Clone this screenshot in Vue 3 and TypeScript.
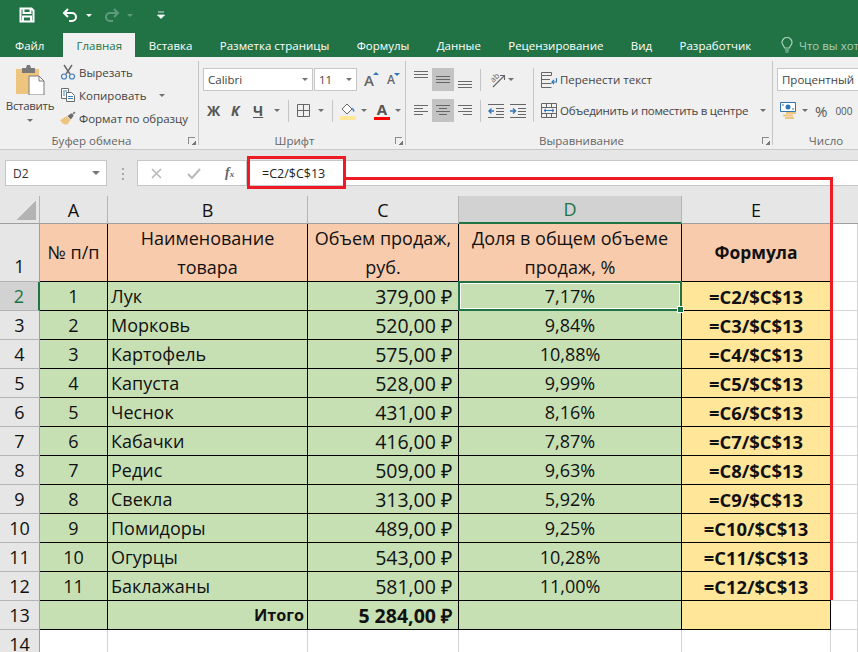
<script setup lang="ts">
interface Row {
  n: number
  name: string
  sum: string
  share: string
}

const tabs = ['Файл', 'Главная', 'Вставка', 'Разметка страницы', 'Формулы', 'Данные', 'Рецензирование', 'Вид', 'Разработчик']
const columns = ['A', 'B', 'C', 'D', 'E', '']

const rows: Row[] = [
  { n: 1, name: 'Лук', sum: '379,00 ₽', share: '7,17%' },
  { n: 2, name: 'Морковь', sum: '520,00 ₽', share: '9,84%' },
  { n: 3, name: 'Картофель', sum: '575,00 ₽', share: '10,88%' },
  { n: 4, name: 'Капуста', sum: '528,00 ₽', share: '9,99%' },
  { n: 5, name: 'Чеснок', sum: '431,00 ₽', share: '8,16%' },
  { n: 6, name: 'Кабачки', sum: '416,00 ₽', share: '7,87%' },
  { n: 7, name: 'Редис', sum: '509,00 ₽', share: '9,63%' },
  { n: 8, name: 'Свекла', sum: '313,00 ₽', share: '5,92%' },
  { n: 9, name: 'Помидоры', sum: '489,00 ₽', share: '9,25%' },
  { n: 10, name: 'Огурцы', sum: '543,00 ₽', share: '10,28%' },
  { n: 11, name: 'Баклажаны', sum: '581,00 ₽', share: '11,00%' },
]
</script>

<template>
  <div class="page">
    <div class="titlebar">
      <svg class="qa-save" width="16" height="16" viewBox="0 0 16 16"><path d="M1.500 1.500h11l2 2v11h-13z M4.500 2v4h7V2 M4 14.500V9.500h8v5" fill="none" stroke="#fff" stroke-width="2" /></svg>
      <svg class="qa-undo" width="16" height="14" viewBox="0 0 16 14"><path d="M6 1 2 5l4 4M2 5h8a4 4 0 0 1 0 8H7" fill="none" stroke="#fff" stroke-width="2" /></svg>
      <span class="qa-arrow"></span>
      <svg class="qa-redo" width="16" height="14" viewBox="0 0 16 14"><path d="M10 1l4 4-4 4M14 5H6a4 4 0 0 0 0 8h3" fill="none" stroke="#5f9b7c" stroke-width="2" /></svg>
      <span class="qa-arrow dim"></span>
      <svg class="qa-more" width="8" height="8" viewBox="0 0 8 8"><path d="M1 1h6M0.500 4h7L4 7.500z" fill="#fff" stroke="#fff" stroke-width="0.800" /></svg>
    </div>

    <div class="tabbar">
      <div v-for="tab in tabs" :key="tab" class="tab" :class="{ active: tab === 'Главная', file: tab === 'Файл' }">{{ tab }}</div>
      <svg class="bulb" width="12" height="16" viewBox="0 0 12 16"><path d="M3.500 11C3 8.500 1 8 1 5.500a5 5 0 0 1 10 0C11 8 9 8.500 8.500 11zM4 13h4M4.500 15h3" fill="none" stroke="#a9cfbb" stroke-width="1.200" /></svg>
      <div class="tell">Что вы хотите сделать?</div>
    </div>

    <div class="ribbon">
      <section class="group g-clip">
        <div class="clip-body">
          <div class="paste">
            <svg width="30" height="30" viewBox="0 0 30 30">
              <path d="M1 4h23v25H1z" fill="#eec57e" />
              <path d="M7 3h4l1-3h3l1 3h4v5H7z" fill="#787878" />
              <path d="M14 11h10l5 5v14H14z" fill="#fff" stroke="#7a7a7a" />
              <path d="M24 11v5h5" fill="none" stroke="#7a7a7a" />
            </svg>
            <span>Вставить</span>
            <i class="caret"></i>
          </div>
          <div class="clip-list">
            <div class="clip-item">
              <svg width="16" height="16" viewBox="0 0 16 16"><path d="M4 1l6 9M12 1 6 10" stroke="#6b6b6b" stroke-width="1.500" fill="none" /><circle cx="4" cy="12.500" r="2.500" fill="none" stroke="#3f7fbf" stroke-width="1.200" /><circle cx="12" cy="12.500" r="2.500" fill="none" stroke="#3f7fbf" stroke-width="1.200" /></svg>
              <span>Вырезать</span>
            </div>
            <div class="clip-item">
              <svg width="16" height="16" viewBox="0 0 16 16"><path d="M1.500 1.500h7v10h-7z" fill="#fff" stroke="#6b6b6b" /><path d="M6.500 5.500h5l3 3v6h-8z" fill="#fff" stroke="#6b6b6b" /><path d="M8 9.500h5M8 11.500h5M3 4h4M3 6h2M3 8h2" stroke="#3f7fbf" /></svg>
              <span>Копировать</span>
              <i class="caret copy-caret"></i>
            </div>
            <div class="clip-item">
              <svg width="17" height="16" viewBox="0 0 17 16"><path d="M0 10.500 7 6l4 4-3 5H5l-1-1-1 .500-1-2z" fill="#eec57e" /><path d="M8 6l4-3 1 1 2-3 1.500 1.500-3 2 1 1-3 4z" fill="#6b6b6b" /></svg>
              <span>Формат по образцу</span>
            </div>
          </div>
        </div>
        <div class="group-foot"><span>Буфер обмена</span><i class="launcher"></i></div>
      </section>

      <section class="group g-font">
        <div class="tool-rows">
          <div class="tool-row">
            <div class="combo font-name">Calibri<i class="caret"></i></div>
            <div class="combo font-size">11<i class="caret"></i></div>
            <div class="grow-a big">A<i class="up"></i></div>
            <div class="grow-a small">A<i class="down"></i></div>
          </div>
          <div class="tool-row format-row">
            <b class="fmt f-b">Ж</b>
            <b class="fmt f-i">К</b>
            <b class="fmt f-u">Ч</b>
            <i class="caret"></i>
            <span class="vsep s1"></span>
            <svg class="f-border" width="13" height="13" viewBox="0 0 13 13"><path d="M.5.500h12v12H.500zM6.500.500v12M.5 6.500h12" fill="none" stroke="#666" /></svg>
            <i class="caret f-c2"></i>
            <span class="vsep s2"></span>
            <svg class="f-fill" width="16" height="18" viewBox="0 0 16 18"><path d="M2 7l5-5 5 5-5 5z" fill="#fff" stroke="#666" /><path d="M12 5.500c2 1 3 3 2 4.500-1-.5-2-2-2-4.500z" fill="#3f7fbf" /><path d="M0 14h16v4H0z" fill="#ffe699" /></svg>
            <i class="caret f-c3"></i>
            <div class="font-color">A</div>
            <i class="caret f-c4"></i>
          </div>
        </div>
        <div class="group-foot"><span>Шрифт</span><i class="launcher"></i></div>
      </section>

      <section class="group g-align">
        <div class="align-body">
          <div class="align-col">
            <div class="tool-row">
              <svg width="22" height="23" viewBox="0 0 22 23"><path d="M4 3.500h14M4 6.500h14M4 9.500h14" stroke="#6a6a6a" /></svg>
              <svg class="on" width="22" height="23" viewBox="0 0 22 23"><path d="M4 8.500h14M4 11.500h14M4 14.500h14" stroke="#666" /></svg>
              <svg width="22" height="23" viewBox="0 0 22 23"><path d="M4 13.500h14M4 16.500h14M4 19.500h14" stroke="#6a6a6a" /></svg>
              <span class="vsep al-sep"></span>
              <svg class="orient" width="18" height="18" viewBox="0 0 18 18"><text x="2" y="10" transform="rotate(-45 6 7)" font-size="8" fill="#666">ab</text><path d="M5 16 16 5M12 4.500h4.500V9" fill="none" stroke="#666" stroke-width="1.100" /></svg>
              <i class="caret or-caret"></i>
            </div>
            <div class="tool-row">
              <svg width="22" height="23" viewBox="0 0 22 23"><path d="M4 6.500h14M4 9.500h9M4 12.500h14M4 15.500h9" stroke="#6a6a6a" /></svg>
              <svg class="on" width="22" height="23" viewBox="0 0 22 23"><path d="M4 6.500h14M7 9.500h8M4 12.500h14M7 15.500h8" stroke="#666" /></svg>
              <svg width="22" height="23" viewBox="0 0 22 23"><path d="M4 6.500h14M9 9.500h9M4 12.500h14M9 15.500h9" stroke="#6a6a6a" /></svg>
              <span class="vsep al-sep"></span>
              <svg class="indent" width="16" height="14" viewBox="0 0 16 14"><path d="M0 .500h16M8 4.500h8M8 7.500h8M8 10.500h8M0 13.500h16" stroke="#666" /><path d="M6 7H1M3.500 4.500 1 7l2.500 2.500" fill="none" stroke="#2f75b5" stroke-width="1.400" /></svg>
              <svg class="indent two" width="16" height="14" viewBox="0 0 16 14"><path d="M0 .500h16M8 4.500h8M8 7.500h8M8 10.500h8M0 13.500h16" stroke="#666" /><path d="M0 7h5M3 4.500 5.500 7 3 9.500" fill="none" stroke="#2f75b5" stroke-width="1.400" /></svg>
            </div>
          </div>
          <span class="vsep tall"></span>
          <div class="merge-col">
            <div class="merge-item">
              <svg width="16" height="16" viewBox="0 0 16 16"><path d="M.5.500h10v3H.500zM.5 3.500v12h10M.5 7.500H9M.5 11.500h10" fill="none" stroke="#666" /><path d="M15.500 6v4H11M13 8l-2 2 2 2" fill="none" stroke="#2f75b5" stroke-width="1.200" /></svg>
              <span>Перенести текст</span>
            </div>
            <div class="merge-item">
              <svg width="16" height="15" viewBox="0 0 16 15"><path d="M.5.500h15v14H.500zM.5 4.500h15M.5 10.500h15M5.500.500v4M10.500.500v4M5.500 10.500v4M10.500 10.500v4" fill="none" stroke="#666" /><path d="M3 7.500h10M5 5.800 3 7.500l2 1.700M11 5.800l2 1.700-2 1.700" fill="none" stroke="#2f75b5" /></svg>
              <span class="merge-text">Объединить и поместить в центре</span>
              <i class="caret merge-caret"></i>
            </div>
          </div>
        </div>
        <div class="group-foot"><span>Выравнивание</span><i class="launcher"></i></div>
      </section>

      <section class="group g-num">
        <div class="tool-rows">
          <div class="tool-row">
            <div class="combo num-format">Процентный</div>
          </div>
          <div class="tool-row num-row">
            <svg width="17" height="17" viewBox="0 0 17 17"><path d="M.5.500h15v9H.500z" fill="#fff" stroke="#2f75b5" /><circle cx="8" cy="5" r="2.500" fill="#2f75b5" /><path d="M2 3h2M12 7h2" stroke="#2f75b5" /><path d="M6 10h10v2H6zM3 12.500h10v2H3zM5 15h9v2H5z" fill="#eec57e" /></svg>
            <i class="caret num-caret"></i>
            <span class="percent">%</span>
            <span class="thousand">000</span>
          </div>
        </div>
        <div class="group-foot"><span>Число</span><i class="launcher"></i></div>
      </section>
    </div>

    <div class="formula-row">
      <div class="name-box"><span>D2</span><i class="caret"></i></div>
      <div class="dots"><i></i><i></i><i></i></div>
      <div class="fx-buttons">
        <svg width="11" height="11" viewBox="0 0 11 11"><path d="M1 1l9 9M10 1l-9 9" stroke="#b8b8b8" stroke-width="1.600" /></svg>
        <svg width="14" height="11" viewBox="0 0 14 11"><path d="M1 6l4 4 8-9" fill="none" stroke="#b8b8b8" stroke-width="2" /></svg>
        <span class="fx">f<small>x</small></span>
      </div>
      <div class="formula-input">=C2/$C$13</div>
    </div>

    <div class="sheet">
      <div class="corner"><i></i></div>
      <div v-for="col in columns" :key="col" class="col-head" :class="{ current: col === 'D', blank: col === '' }">{{ col }}</div>

      <div class="row-head first">1</div>
      <div class="cell head">№ п/п</div>
      <div class="cell head">Наименование<br />товара</div>
      <div class="cell head">Объем продаж,<br />руб.</div>
      <div class="cell head">Доля в общем объеме<br />продаж, %</div>
      <div class="cell head strong">Формула</div>
      <div class="cell empty"></div>

      <template v-for="(row, i) in rows" :key="row.n">
        <div class="row-head" :class="{ current: i === 0 }">{{ i + 2 }}</div>
        <div class="cell body center">{{ row.n }}</div>
        <div class="cell body left">{{ row.name }}</div>
        <div class="cell body right">{{ row.sum }}</div>
        <div class="cell body center" :class="{ selected: i === 0 }">{{ row.share }}</div>
        <div class="cell formula">=C{{ i + 2 }}/$C$13</div>
        <div class="cell empty"></div>
      </template>

      <div class="row-head">13</div>
      <div class="cell body"></div>
      <div class="cell body total">Итого</div>
      <div class="cell body right bold">5 284,00 ₽</div>
      <div class="cell body"></div>
      <div class="cell formula"></div>
      <div class="cell empty"></div>

      <div class="row-head">14</div>
      <div v-for="n in 6" :key="n" class="cell empty"></div>
    </div>

    <!-- красная выноска поверх таблицы -->
    <div class="callout-box"></div>
    <div class="callout-h"></div>
    <div class="callout-v"></div>
  </div>
</template>

<style>
html,
body {
  margin: 0;
  overflow: hidden;
}
</style>

<style scoped>
.page {
  position: relative;
  width: 858px;
  height: 652px;
  overflow: hidden;
  background: #fff;
  font-family: "Open Sans", "Liberation Sans", sans-serif;
  color: #444;
}

.titlebar {
  display: flex;
  align-items: center;
  height: 33px;
  background: #217346;
}

.qa-save { margin: -3px 0 0 19px; }
.qa-undo { margin: -3px 0 0 27px; }
.qa-redo { margin: -3px 0 0 12px; }
.qa-more { margin: -3px 0 0 24px; }

.qa-arrow {
  width: 0;
  height: 0;
  margin: -2px 0 0 8px;
  border: 3px solid transparent;
  border-top: 3px solid #fff;
  border-bottom: 0;
}

.qa-arrow.dim { margin-left: 7px; border-top-color: #5f9b7c; }

.tabbar {
  display: flex;
  align-items: center;
  height: 24px;
  background: #217346;
  color: #fff;
  font-size: 11.500px;
  white-space: nowrap;
}

.tab {
  display: flex;
  flex: none;
  align-items: center;
  height: 24px;
  padding: 0 13.700px;
}

.tab.file { padding: 0 19px 0 15px; }

.tab.active {
  padding: 0 13px;
  background: #f0f0f0;
  color: #217346;
}

.bulb { flex: none; margin-left: 16px; }

.tell {
  margin-left: 6px;
  color: #a9cfbb;
}

.ribbon {
  display: flex;
  height: 92px;
  box-sizing: content-box;
  overflow: hidden;
  background: #f0f0f0;
  border-bottom: 1px solid #c9c9c9;
  font-size: 11.500px;
}

.group {
  position: relative;
  display: flex;
  flex: none;
  flex-direction: column;
  box-sizing: border-box;
  padding-top: 11px;
}

.group::after {
  content: "";
  position: absolute;
  top: 4px;
  right: 0;
  bottom: 4px;
  width: 1px;
  background: #c6c6c6;
}

.g-clip { width: 199px; padding-top: 4px; }
.g-font { width: 207px; }
.g-align { width: 367px; }
.g-num { width: 122px; }

.group-foot {
  display: flex;
  align-items: center;
  height: 16px;
  margin-top: auto;
  margin-bottom: 1px;
  color: #666;
}

.group-foot span {
  flex: 1;
  text-align: center;
}

.launcher {
  position: relative;
  width: 7px;
  height: 7px;
  margin: 0 4px 0 5px;
  border-left: 1px solid #8a8a8a;
  border-top: 1px solid #8a8a8a;
  box-sizing: border-box;
}

.launcher::after {
  content: "";
  position: absolute;
  right: -1px;
  bottom: -1px;
  width: 4px;
  height: 4px;
  background: linear-gradient(135deg, transparent 50%, #777 50%);
}

.caret {
  display: inline-block;
  flex: none;
  width: 0;
  height: 0;
  border: 3px solid transparent;
  border-top: 3px solid #707070;
  border-bottom: 0;
}

.clip-body {
  display: flex;
  height: 66px;
}

.paste {
  display: flex;
  flex-direction: column;
  align-items: center;
  width: 60px;
  padding-top: 4px;
}

.paste span { margin-top: 3px; letter-spacing: -0.300px; }
.paste .caret { margin-top: 6px; }

.clip-list {
  display: flex;
  flex-direction: column;
  gap: 7px;
  margin-top: 3px;
}

.clip-item {
  display: flex;
  align-items: center;
  gap: 3px;
  height: 16px;
}

.clip-item svg { flex: none; width: 16px; }
.copy-caret { margin-left: 9px; }

.tool-rows {
  display: flex;
  flex-direction: column;
  gap: 8px;
  padding-left: 4px;
}

.tool-row {
  display: flex;
  align-items: center;
  height: 23px;
}

.combo {
  display: flex;
  align-items: center;
  justify-content: space-between;
  box-sizing: border-box;
  height: 23px;
  padding: 0 4px;
  background: #fff;
  border: 1px solid #c6c6c6;
  color: #444;
}

.font-name { width: 110px; }
.font-size { width: 43px; margin-left: 1px; }

.grow-a {
  position: relative;
  color: #666;
  font-weight: 600;
}

.grow-a.big { margin-left: 7px; font-size: 15px; }
.grow-a.small { margin-left: 13px; font-size: 12px; }

.grow-a i {
  position: absolute;
  top: 2px;
  right: -5px;
  width: 0;
  height: 0;
  border: 3px solid transparent;
}

.grow-a .up { border-top: 0; border-bottom: 3px solid #2f75b5; }
.grow-a .down { border-bottom: 0; border-top: 3px solid #2f75b5; }

.format-row { color: #555; }

.fmt { font-size: 14px; line-height: 1; }
.f-b { margin-left: 4px; width: 24px; }
.f-i { width: 22px; font-style: italic; }
.f-u { width: 21px; text-decoration: underline; }

.vsep {
  flex: none;
  width: 1px;
  height: 22px;
  background: #c6c6c6;
}

.s1 { margin-left: 8px; }
.f-border { margin-left: 8px; }
.f-c2 { margin-left: 8px; }
.s2 { margin-left: 8px; }
.f-fill { margin-left: 7px; }
.f-c3 { margin-left: 5px; }

.font-color {
  box-sizing: border-box;
  width: 16px;
  margin-left: 7px;
  border-bottom: 3px solid #f00;
  color: #555;
  font-size: 15px;
  font-weight: 700;
  line-height: 16px;
  text-align: center;
}

.f-c4 { margin-left: 5px; }

.align-body { display: flex; height: 54px; }

.align-col {
  display: flex;
  flex-direction: column;
  gap: 8px;
  width: 127px;
  padding-left: 4px;
  box-sizing: border-box;
}

.align-col svg { flex: none; }
.on { background: #c3c3c3; }
.al-sep { margin-left: 4px; }
.orient { margin-left: 7px; }
.or-caret { margin-left: 2px; }
.indent { margin-left: 7px; }
.indent.two { margin-left: 6px; }

.tall { height: 54px; }

.merge-col {
  display: flex;
  flex-direction: column;
  gap: 8px;
  padding-left: 7px;
}

.merge-item {
  display: flex;
  align-items: center;
  gap: 3px;
  height: 23px;
  white-space: nowrap;
}

.merge-text { letter-spacing: -0.250px; }
.merge-caret { margin-left: 9px; }

.num-format { width: 130px; padding-left: 4px; }

.num-row { padding-left: 3px; }
.num-caret { margin-left: 5px; }
.percent { margin-left: 7px; font-size: 15px; color: #555; }
.thousand { margin-left: 8px; font-size: 10px; color: #555; }

.formula-row {
  display: flex;
  align-items: flex-start;
  height: 46px;
  padding-top: 10px;
  box-sizing: border-box;
  background: #e6e6e6;
}

.name-box {
  display: flex;
  align-items: center;
  justify-content: space-between;
  box-sizing: border-box;
  width: 102px;
  height: 26px;
  margin-left: 5px;
  padding: 0 6px 0 7px;
  background: #fff;
  border: 1px solid #c6c6c6;
  color: #333;
  font-size: 12px;
}

.name-box .caret { border-width: 4px 4px 0; border-top-color: #777; }

.dots {
  display: flex;
  flex-direction: column;
  gap: 3px;
  margin: 8px 0 0 15px;
}

.dots i {
  width: 2px;
  height: 2px;
  background: #a8a8a8;
}

.fx-buttons {
  display: flex;
  align-items: center;
  box-sizing: border-box;
  width: 109px;
  height: 26px;
  margin-left: 13px;
  padding-left: 13px;
  gap: 25px;
  background: #fff;
  border: 1px solid #c6c6c6;
  border-right: 0;
}

.fx {
  margin-left: -1px;
  color: #666;
  font-family: "Liberation Serif", serif;
  font-size: 14px;
  font-style: italic;
  font-weight: 700;
}

.fx small { font-size: 9px; }

.formula-input {
  flex: 1;
  box-sizing: border-box;
  height: 26px;
  padding-left: 15px;
  background: #fff;
  border: 1px solid #c6c6c6;
  border-right: 0;
  color: #222;
  font-size: 12.500px;
  line-height: 26px;
}

.sheet {
  display: grid;
  grid-template-columns: 40px 68px 200px 151px 223px 149px 27px;
  grid-template-rows: 28px 58px repeat(12, 29px) 29px;
  font-size: 18px;
  color: #111;
}

.corner {
  display: flex;
  align-items: flex-end;
  justify-content: flex-end;
  padding: 0 3px 3px 0;
  background: #e6e6e6;
  border-right: 1px solid #b4b4b4;
  border-bottom: 1px solid #9f9f9f;
  box-sizing: border-box;
}

.corner i {
  width: 20px;
  height: 20px;
  background: linear-gradient(135deg, transparent 50%, #b4b4b4 50%);
}

.col-head {
  display: flex;
  align-items: center;
  justify-content: center;
  box-sizing: border-box;
  background: #e6e6e6;
  border-right: 1px solid #b4b4b4;
  border-bottom: 1px solid #9f9f9f;
}

.col-head.blank { border-right: 0; }

.col-head.current {
  background: #d2d2d2;
  border-bottom: 2px solid #217346;
  color: #217346;
}

.row-head {
  display: flex;
  align-items: center;
  justify-content: center;
  box-sizing: border-box;
  background: #e6e6e6;
  border-right: 1px solid #9f9f9f;
  border-bottom: 1px solid #b4b4b4;
}

.row-head.first { align-items: flex-end; line-height: 29px; }

.row-head.current {
  background: #d2d2d2;
  border-right: 2px solid #217346;
  color: #217346;
}

.cell {
  display: flex;
  align-items: center;
  box-sizing: border-box;
  white-space: nowrap;
  border-right: 1px solid #000;
  border-bottom: 1px solid #000;
}

.head {
  justify-content: center;
  background: #f8cbad;
  line-height: 29px;
  text-align: center;
}

.strong { font-weight: 700; font-size: 17.400px; }

.body { background: #c6e0b4; }
.center { justify-content: center; }
.left { padding-left: 3px; }
.right { justify-content: flex-end; padding-right: 6px; font-size: 19.500px; }
.bold { font-weight: 700; }

.total {
  justify-content: flex-end;
  padding-right: 3px;
  font-weight: 700;
  font-size: 16.200px;
}

.formula {
  justify-content: center;
  background: #ffe699;
  font-weight: 700;
  font-size: 18.400px;
}

.empty {
  background: #fff;
  border-right: 1px solid #d4d4d4;
  border-bottom: 1px solid #d4d4d4;
}

.selected { position: relative; }

.selected::before {
  content: "";
  position: absolute;
  inset: -1px;
  border: 2px solid #217346;
  box-shadow: inset 0 0 0 1px #fff;
}

.selected::after {
  content: "";
  position: absolute;
  right: -3px;
  bottom: -3px;
  width: 5px;
  height: 5px;
  background: #217346;
  border: 1px solid #fff;
}

.callout-box {
  position: absolute;
  left: 247px;
  top: 156px;
  box-sizing: border-box;
  width: 99px;
  height: 33px;
  border: 3px solid #ed1c24;
}

.callout-h {
  position: absolute;
  left: 346px;
  top: 177px;
  width: 487px;
  height: 3px;
  background: #ed1c24;
}

.callout-v {
  position: absolute;
  left: 830px;
  top: 177px;
  width: 3px;
  height: 423px;
  background: #ed1c24;
}
</style>
